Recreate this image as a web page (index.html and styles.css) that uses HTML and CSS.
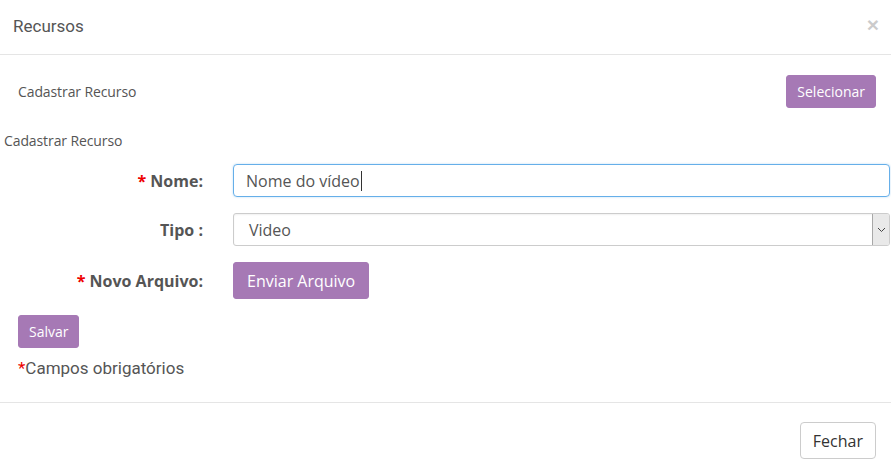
FILE: index.html
```html
<!DOCTYPE html>
<html>
<head>
<meta charset="utf-8">
<link rel="stylesheet" href="styles.css">
</head>
<body>
<div class="modal">
  <div class="modal-header">
    <h4 class="title">Recursos</h4>
    <span class="close">×</span>
  </div>
  <div class="modal-body">
    <div class="top-row">
      <span class="small-text">Cadastrar Recurso</span>
      <button class="btn btn-purple btn-sm">Selecionar</button>
    </div>
    <div class="section-title small-text">Cadastrar Recurso</div>
    <div class="form">
      <div class="form-row">
        <label class="lbl"><span class="req">*</span> Nome:</label>
        <div class="field input focus"><span>Nome do vídeo</span><span class="caret"></span></div>
      </div>
      <div class="form-row">
        <label class="lbl">Tipo :</label>
        <div class="field select"><span class="sel-text">Video</span><span class="arrow"><svg width="9" height="6" viewBox="0 0 9 6"><path d="M1 1 L4.5 4.5 L8 1" fill="none" stroke="#444" stroke-width="1"/></svg></span></div>
      </div>
      <div class="form-row">
        <label class="lbl"><span class="req">*</span> Novo Arquivo:</label>
        <div class="field-btn"><button class="btn btn-purple btn-lg">Enviar Arquivo</button></div>
      </div>
    </div>
    <div class="save-row"><button class="btn btn-purple btn-sm">Salvar</button></div>
    <p class="note"><span class="req">*</span>Campos obrigatórios</p>
  </div>
  <div class="modal-footer">
    <button class="btn btn-default">Fechar</button>
  </div>
</div>
</body>
</html>
```
FILE: styles.css
```css
* { box-sizing: border-box; }
html, body { margin: 0; padding: 0; background: #fff; }
body { width: 891px; height: 473px; overflow: hidden; font-family: "Open Sans", sans-serif; color: #555; }

.modal-header {
  height: 55px;
  border-bottom: 1px solid #e5e5e5;
  display: flex;
  align-items: center;
  justify-content: space-between;
  padding: 0 12px 2px 13px;
}
.title { margin: 0; font-family: Roboto, sans-serif; font-weight: 400; font-size: 17px; color: #555; }
.close { font-family: "Liberation Sans", sans-serif; font-weight: bold; font-size: 21px; color: #000; opacity: .2; line-height: 1; margin-top: -4px; }

.modal-body { padding: 20px 15px 0 0; height: 348px; border-bottom: 1px solid #e5e5e5; }
.top-row { display: flex; align-items: center; justify-content: space-between; padding-left: 18px; }
.small-text { font-size: 14px; color: #555; line-height: 18px; letter-spacing: -0.1px; }
.section-title { margin-top: 24px; padding-left: 4px; }

.btn { font-family: "Open Sans", sans-serif; border-radius: 3px; border: 1px solid transparent; cursor: pointer; }
.btn-purple { background: #a679b5; color: #fff; border-color: #a679b5; }
.btn-sm { height: 33px; font-size: 14px; padding: 0 10px; }
.btn-lg { height: 37px; font-size: 16px; padding: 0 13px; }

.form { margin-top: 14px; display: flex; flex-direction: column; gap: 16px; }
.form-row { display: flex; align-items: center; }
.lbl { width: 203px; text-align: right; font-weight: 700; font-size: 16px; color: #555; margin-right: 30px; }
.req { color: #e00; }

.field { flex: 1; height: 33px; display: flex; align-items: center; font-size: 16px; color: #555; margin-right: -14px; }
.input { border: 1px solid #66afe9; border-radius: 4px; padding-left: 12px; box-shadow: 0 0 2px rgba(102,175,233,.5); }
.caret { display: inline-block; width: 1px; height: 20px; background: #333; margin-left: 1px; }
.select { border: 1px solid #ccc; border-radius: 3px; padding-left: 15px; box-shadow: inset 0 1px 2px rgba(0,0,0,.06); }
.sel-text { flex: 1; }
.arrow { width: 17px; height: 31px; background: #e9e9e9; border-left: 1px solid #a8a8a8; display: flex; align-items: center; justify-content: center; border-radius: 0 2px 2px 0; }

.save-row { margin-top: 16px; padding-left: 18px; }
.note { margin: 9px 0 0 18px; font-family: Roboto, sans-serif; font-size: 17px; line-height: 22px; color: #555; }

.modal-footer { display: flex; justify-content: flex-end; padding: 19px 15px 0 0; }
.btn-default { background: #fff; border: 1px solid #ccc; color: #333; height: 37px; font-size: 16px; padding: 0 12px; border-radius: 4px; }
```
